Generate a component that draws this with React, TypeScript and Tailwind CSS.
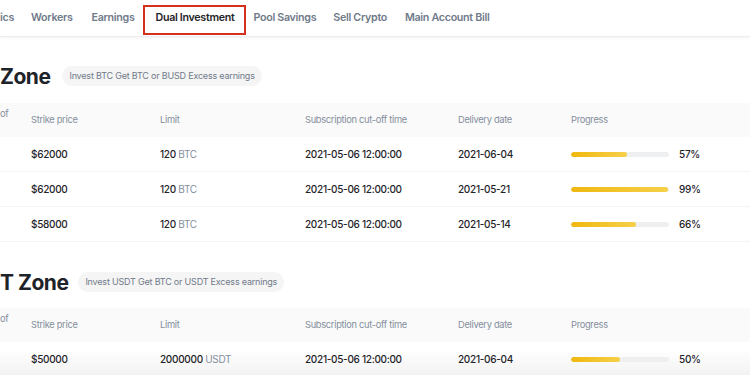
import React from "react";

type Row = {
  strike: string;
  amount: string;
  unit: string;
  cutoff: string;
  delivery: string;
  progress: number;
};

const btcRows: Row[] = [
  { strike: "$62000", amount: "120", unit: "BTC", cutoff: "2021-05-06 12:00:00", delivery: "2021-06-04", progress: 57 },
  { strike: "$62000", amount: "120", unit: "BTC", cutoff: "2021-05-06 12:00:00", delivery: "2021-05-21", progress: 99 },
  { strike: "$58000", amount: "120", unit: "BTC", cutoff: "2021-05-06 12:00:00", delivery: "2021-05-14", progress: 66 },
];

const usdtRows: Row[] = [
  { strike: "$50000", amount: "2000000", unit: "USDT", cutoff: "2021-05-06 12:00:00", delivery: "2021-06-04", progress: 50 },
];

const cols = "grid grid-cols-[31px_129px_145px_153px_113px_1fr]";

function cn(...classes: (string | false | undefined)[]) {
  return classes.filter(Boolean).join(" ");
}

function Progress({ value }: { value: number }) {
  return (
    <div className="flex items-center">
      <div className="h-[5px] w-[98px] rounded-full bg-[#eeeff1] overflow-hidden">
        <div
          className="h-full rounded-full bg-[linear-gradient(90deg,#efb80f,#f6d04a)]"
          style={{ width: `${value}%` }}
        />
      </div>
      <span className="ml-[10px]">{value}%</span>
    </div>
  );
}

function ZoneTable({ rows, last }: { rows: Row[]; last?: boolean }) {
  return (
    <div>
      <div className={cn(cols, "h-[34px] items-center bg-[#fafafa] text-[9.3px] tracking-[-0.3px] text-[#848e9c]")}>
        <span className="-mt-[12px]">of</span>
        <span>Strike price</span>
        <span>Limit</span>
        <span>Subscription cut-off time</span>
        <span>Delivery date</span>
        <span>Progress</span>
      </div>
      {rows.map((row, index) => (
        <div
          key={index}
          className={cn(
            cols,
            "h-[35px] items-center text-[10px] font-medium tracking-[-0.3px] text-[#1e2329]",
            last ? "bg-[linear-gradient(180deg,#ffffff_20%,#f1f1f1)]" : "border-b border-[#f3f4f5]"
          )}
        >
          <span />
          <span>{row.strike}</span>
          <span>
            {row.amount} <span className="font-normal text-[#848e9c]">{row.unit}</span>
          </span>
          <span>{row.cutoff}</span>
          <span>{row.delivery}</span>
          <Progress value={row.progress} />
        </div>
      ))}
    </div>
  );
}

function ZoneHeading({ title, tip, gap }: { title: string; tip: string; gap: string }) {
  return (
    <div className="flex items-center h-[22px]">
      <h2 className="text-[21px] font-bold leading-none text-[#1e2329] tracking-[-0.5px]">{title}</h2>
      <span className={cn(gap, "h-[20px] rounded-full bg-[#f5f5f5] px-[7px] flex items-center text-[9px] tracking-[-0.2px] text-[#707a8a]")}>
        {tip}
      </span>
    </div>
  );
}

export default function App() {
  return (
    <div className="w-[750px] h-[375px] overflow-hidden bg-white font-['Inter',sans-serif]">
      <nav className="h-[37px] flex items-center border-b border-[#eceef0] shadow-[0_1px_3px_rgba(0,0,0,0.06)] text-[10.7px] tracking-[-0.3px] font-semibold text-[#707a8a]">
        <span>ics</span>
        <span className="ml-[17px]">Workers</span>
        <span className="ml-[19px]">Earnings</span>
        <span className="ml-[9px] mt-[3px] h-[30px] px-[10px] flex items-center border-[2.5px] border-[#d5301d] text-[#1e2329]">
          <span className="-mt-[3px]">Dual Investment</span>
        </span>
        <span className="ml-[7px]">Pool Savings</span>
        <span className="ml-[17px]">Sell Crypto</span>
        <span className="ml-[18px]">Main Account Bill</span>
      </nav>

      <section className="mt-[28px]">
        <ZoneHeading title="Zone" tip="Invest BTC Get BTC or BUSD Excess earnings" gap="ml-[12px]" />
        <div className="mt-[16px]">
          <ZoneTable rows={btcRows} />
        </div>
      </section>

      <section className="mt-[29px]">
        <ZoneHeading title="T Zone" tip="Invest USDT Get BTC or USDT Excess earnings" gap="ml-[10px]" />
        <div className="mt-[15px]">
          <ZoneTable rows={usdtRows} last />
        </div>
      </section>
    </div>
  );
}
